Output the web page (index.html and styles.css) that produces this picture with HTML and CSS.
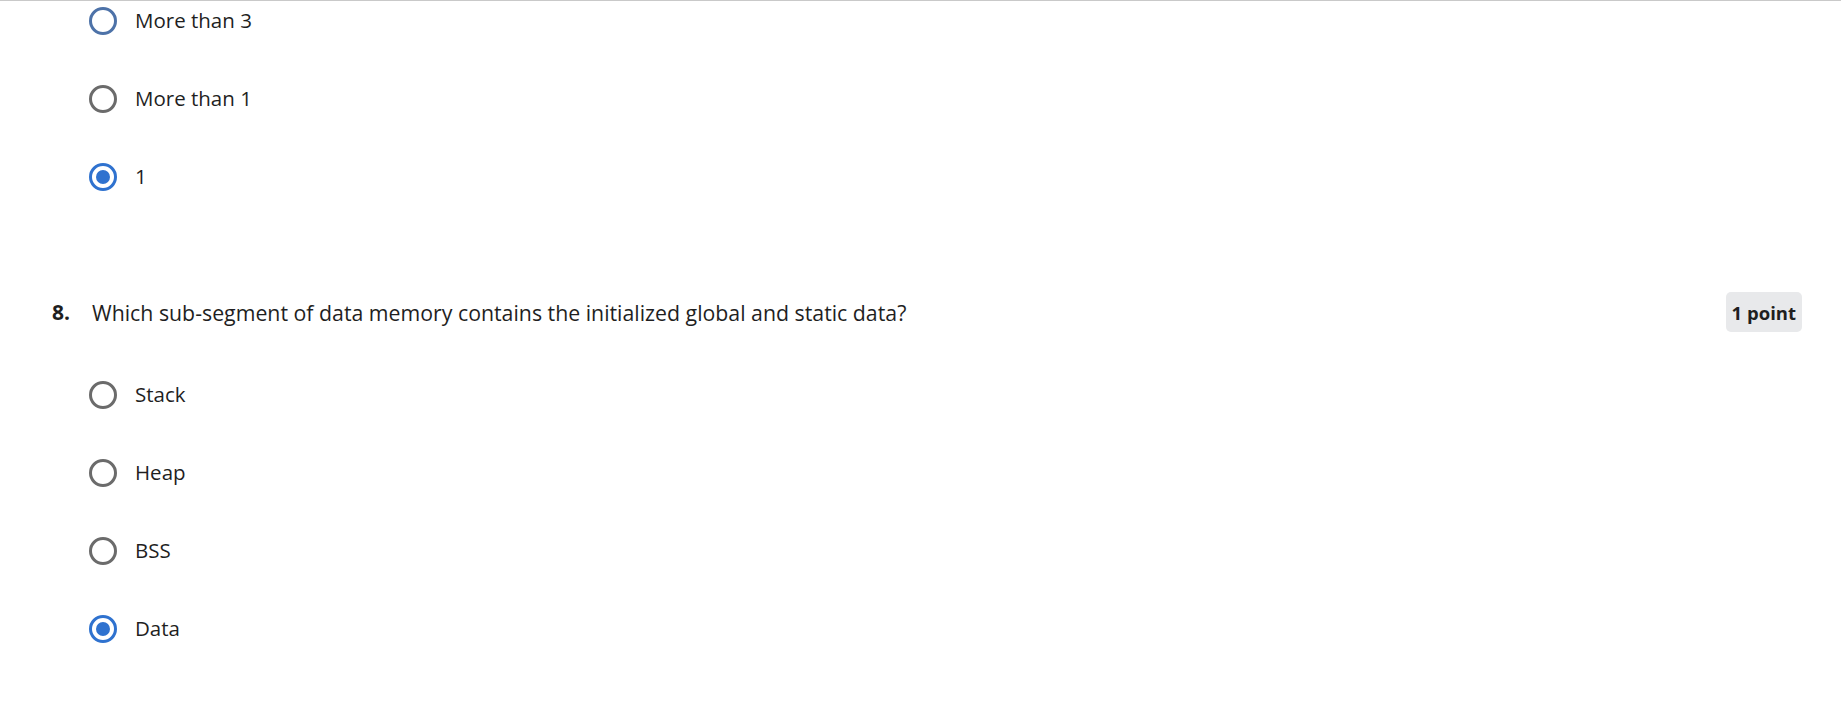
FILE: index.html
```html
<!DOCTYPE html>
<html lang="en">
<head>
<meta charset="utf-8">
<title>Quiz</title>
<link rel="stylesheet" href="styles.css">
</head>
<body>
<div class="page">
  <ul class="options first">
    <li class="option"><span class="radio focus"></span><span class="label">More than 3</span></li>
    <li class="option"><span class="radio"></span><span class="label">More than 1</span></li>
    <li class="option"><span class="radio checked"></span><span class="label">1</span></li>
  </ul>
  <div class="question">
    <span class="num">8.</span>
    <span class="qtext">Which sub-segment of data memory contains the initialized global and static data?</span>
    <span class="badge">1 point</span>
  </div>
  <ul class="options second">
    <li class="option"><span class="radio"></span><span class="label">Stack</span></li>
    <li class="option"><span class="radio"></span><span class="label">Heap</span></li>
    <li class="option"><span class="radio"></span><span class="label">BSS</span></li>
    <li class="option"><span class="radio checked"></span><span class="label">Data</span></li>
  </ul>
</div>
</body>
</html>
```
FILE: styles.css
```css
html, body {
  margin: 0;
  padding: 0;
  background: #ffffff;
}
body {
  font-family: "Open Sans", "Liberation Sans", sans-serif;
  color: #1f1f1f;
}
.page {
  border-top: 1px solid #c9c9c9;
  min-height: 702px;
}
.options {
  list-style: none;
  margin: 0;
  padding: 0 0 0 89px;
  display: flex;
  flex-direction: column;
  gap: 38px;
}
.options.second {
  margin-top: 42px;
}
.option {
  height: 40px;
  display: flex;
  align-items: center;
  gap: 18px;
}
.radio {
  box-sizing: border-box;
  width: 28px;
  height: 28px;
  border-radius: 50%;
  border: 3px solid #6b6b6b;
  display: flex;
  align-items: center;
  justify-content: center;
  flex: none;
}
.radio.focus {
  border-color: #4d72a8;
}
.radio.checked {
  border-color: #2f72cf;
}
.radio.checked::after {
  content: "";
  width: 14px;
  height: 14px;
  border-radius: 50%;
  background: #2f72cf;
}
.label {
  font-size: 20.5px;
  line-height: 28px;
  margin-top: -2px;
}
.question {
  margin-top: 94px;
  height: 42px;
  display: flex;
  align-items: center;
  padding: 0 39px 0 52px;
}
.num {
  font-weight: 700;
  font-size: 21px;
  width: 40px;
  flex: none;
}
.qtext {
  font-size: 21.3px;
  flex: 1;
}
.badge {
  background: #e8e9eb;
  border-radius: 5px;
  height: 40px;
  padding: 0 6px;
  display: flex;
  align-items: center;
  font-weight: 700;
  font-size: 18.5px;
  color: #1f1f1f;
}
```
